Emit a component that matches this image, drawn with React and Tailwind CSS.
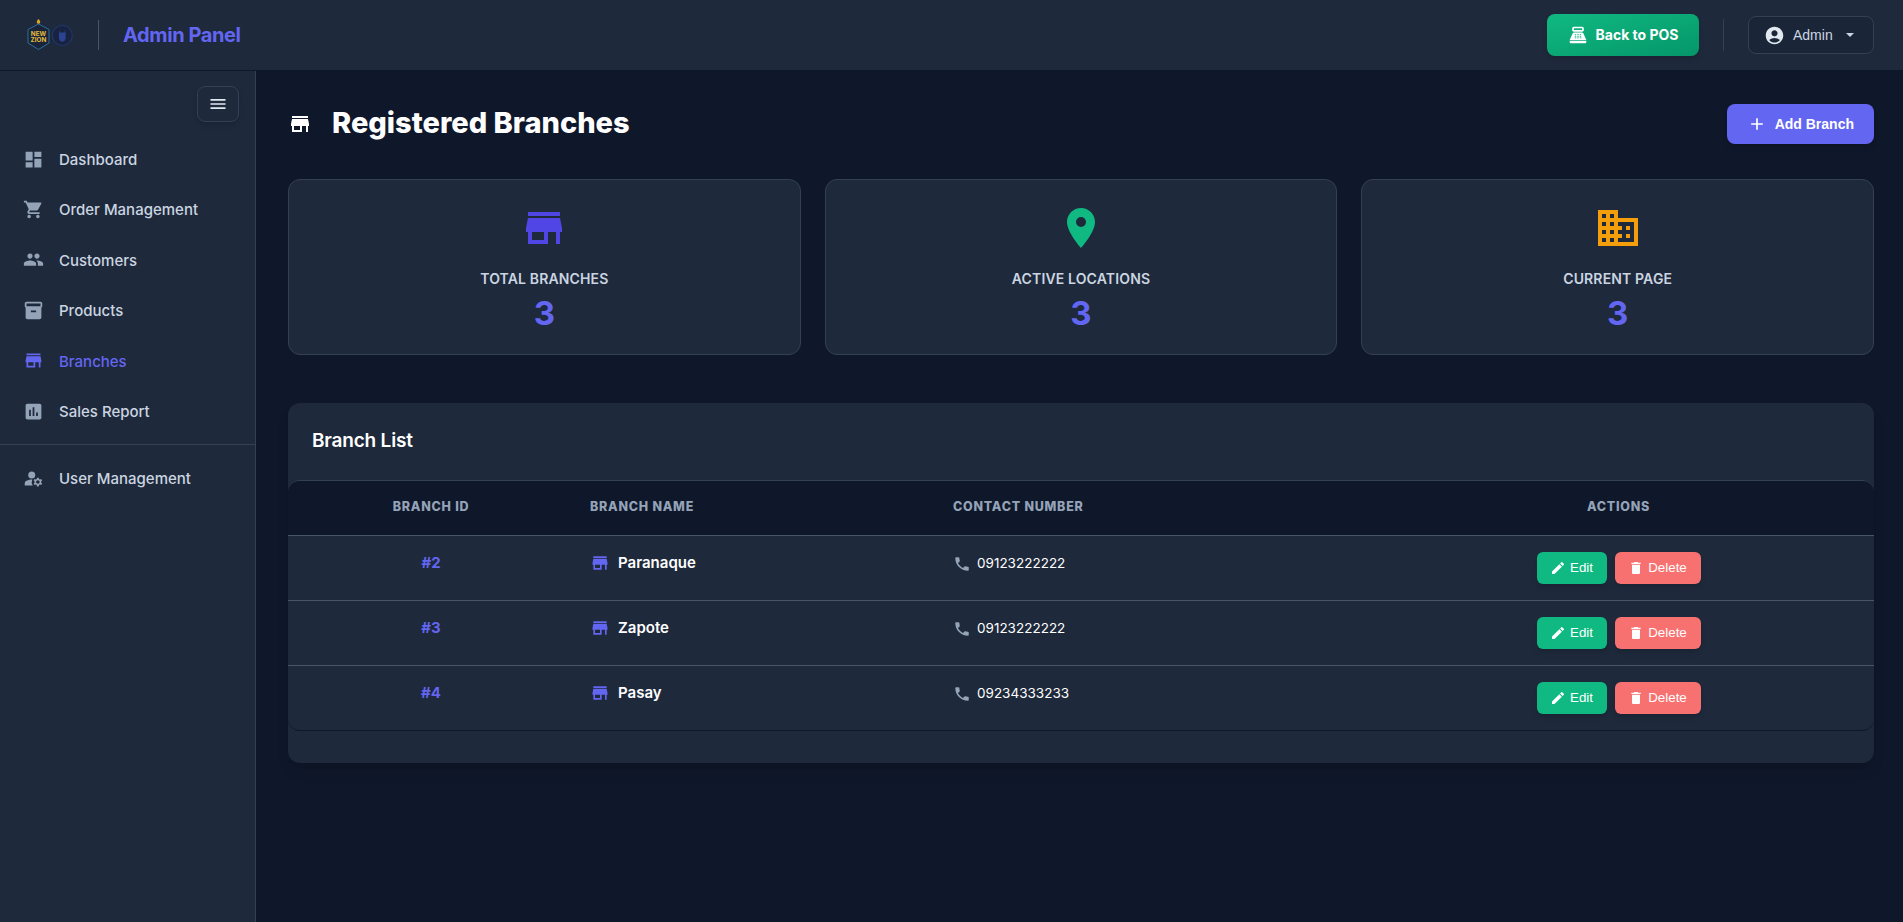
import {
  MdAccountCircle,
  MdAdd,
  MdAssessment,
  MdDashboard,
  MdDelete,
  MdDomain,
  MdEdit,
  MdInventory2,
  MdLocationOn,
  MdManageAccounts,
  MdMenu,
  MdPeople,
  MdPhone,
  MdPointOfSale,
  MdShoppingCart,
  MdStore,
} from "react-icons/md";

const navItems = [
  { label: "Dashboard", icon: MdDashboard },
  { label: "Order Management", icon: MdShoppingCart },
  { label: "Customers", icon: MdPeople },
  { label: "Products", icon: MdInventory2 },
  { label: "Branches", icon: MdStore, active: true },
  { label: "Sales Report", icon: MdAssessment },
];

const stats = [
  { label: "Total Branches", value: 3, icon: MdStore, color: "text-[#4f46e5]" },
  { label: "Active Locations", value: 3, icon: MdLocationOn, color: "text-[#10b981]" },
  { label: "Current Page", value: 3, icon: MdDomain, color: "text-[#f59e0b]" },
];

const branches = [
  { id: 2, name: "Paranaque", phone: "09123222222" },
  { id: 3, name: "Zapote", phone: "09123222222" },
  { id: 4, name: "Pasay", phone: "09234333233" },
];

function Logo() {
  return (
    <svg width="46" height="32" viewBox="0 0 46 32" className="shrink-0">
      <path d="M11.5 0 C13.5 2 14 3.5 11.5 5.5 C9 3.5 9.5 2 11.5 0Z" fill="#d9a528" />
      <path d="M11.5 5 L22 10.5 L22 24 L11.5 30.5 L1 24 L1 10.5Z" fill="#1a2438" stroke="#2b6f9e" strokeWidth="1" />
      <text x="11.5" y="16.5" textAnchor="middle" fontSize="6.4" fontWeight="700" fill="#e3bd3e" fontFamily="Inter, sans-serif">NEW</text>
      <text x="11.5" y="22.5" textAnchor="middle" fontSize="6.4" fontWeight="700" fill="#e3bd3e" fontFamily="Inter, sans-serif">ZION</text>
      <circle cx="35.3" cy="16.5" r="10" fill="#18233f" stroke="#22356b" strokeWidth="1.2" />
      <path d="M33 10.5v3h4.6v-3l1 3.5v6l-1.5 2.5h-3.6l-1.5-2.5v-6Z" fill="#2b4390" />
    </svg>
  );
}

function NavRow({ label, icon: Icon, active }) {
  return (
    <a
      href="#"
      className={`flex h-[50.4px] items-center text-[15px] font-medium ${active ? "text-[#6366f1]" : "text-[#cbd5e1]"}`}
    >
      <span className={`flex w-[59px] justify-center pl-[7px] ${active ? "" : "text-[#94a3b8]"}`}>
        <Icon size={21} />
      </span>
      <span className="pt-[2px]">{label}</span>
    </a>
  );
}

function Sidebar() {
  return (
    <aside className="w-[256px] shrink-0 border-r border-[#334155] bg-[#1e293b] pt-[15px]">
      <div className="flex justify-end pr-4">
        <button
          type="button"
          className="flex h-9 w-[42px] items-center justify-center rounded-lg border border-[#334155] bg-[#1e293b] text-[#e2e8f0] shadow-md"
        >
          <MdMenu size={20} />
        </button>
      </div>
      <nav className="mt-3">
        {navItems.map((item) => (
          <NavRow key={item.label} {...item} />
        ))}
        <div className="my-2 border-t border-[#334155]" />
        <NavRow label="User Management" icon={MdManageAccounts} />
      </nav>
    </aside>
  );
}

export default function App() {
  return (
    <div className="flex min-h-screen flex-col bg-[#0f172a] font-['Inter',sans-serif]">
      <header className="flex h-[71px] shrink-0 items-center justify-between border-b border-[#0f172a] bg-[#1e293b] pl-[27px] pr-[29px]">
        <div className="flex items-center">
          <Logo />
          <div className="ml-[25px] h-[30px] w-px bg-[#475569]" />
          <span className="ml-6 text-xl font-bold tracking-[-0.02em] text-[#6366f1]">Admin Panel</span>
        </div>
        <div className="flex items-center">
          <button
            type="button"
            className="flex h-[42px] w-[152px] items-center justify-center gap-2 rounded-lg bg-gradient-to-br from-[#10b981] to-[#059669] text-sm font-bold text-white shadow-md"
          >
            <MdPointOfSale size={20} />
            Back to POS
          </button>
          <div className="mx-6 h-8 w-px bg-[#334155]" />
          <button
            type="button"
            className="flex h-[38px] w-[126px] items-center rounded-lg border border-[#334155] bg-[#1b2538] pl-[15px] font-['Liberation_Sans',sans-serif] text-sm text-[#cbd5e1]"
          >
            <MdAccountCircle size={21} className="text-[#e2e8f0]" />
            <span className="ml-[8px]">Admin</span>
            <span className="ml-[13px] border-x-[4px] border-t-[4px] border-x-transparent border-t-[#cbd5e1]" />
          </button>
        </div>
      </header>

      <div className="flex flex-1">
        <Sidebar />
        <main className="min-w-0 flex-1 pb-10 pl-8 pr-[29px] pt-[33px]">
          <div className="flex h-10 items-center justify-between">
            <div className="flex items-center gap-5">
              <MdStore size={24} className="text-white" />
              <h1 className="pb-[2px] text-[29px] font-extrabold text-white">Registered Branches</h1>
            </div>
            <button
              type="button"
              className="flex h-10 items-center gap-2 rounded-lg bg-[#6366f1] px-5 font-['Liberation_Sans',sans-serif] text-sm font-bold text-white shadow-md"
            >
              <MdAdd size={20} />
              Add Branch
            </button>
          </div>

          <div className="mt-[35px] grid grid-cols-3 gap-6">
            {stats.map((stat) => (
              <div
                key={stat.label}
                className="flex h-[176px] flex-col items-center rounded-xl border border-[#334155] bg-[#1e293b] pt-6"
              >
                <stat.icon size={48} className={stat.color} />
                <p className="mt-[17px] text-sm font-semibold uppercase tracking-[0.01em] text-[#cbd5e1]">
                  {stat.label}
                </p>
                <p className="mt-1 text-[33px] font-bold leading-10 text-[#6366f1]">{stat.value}</p>
              </div>
            ))}
          </div>

          <section className="mt-[48px] rounded-xl bg-[#1e293b] pb-8 shadow-lg">
            <div className="flex h-[77px] items-center px-6">
              <h2 className="text-[19px] font-semibold tracking-[-0.01em] text-white">Branch List</h2>
            </div>
            <div className="overflow-hidden rounded-xl border-b border-t border-[#0f172a] border-t-[#334155]">
              <table className="w-full table-fixed border-collapse text-sm">
                <thead>
                  <tr className="h-[54px] bg-[#0f172a] text-[12.5px] uppercase tracking-[0.06em] text-[#94a3b8]">
                    <th className="w-[286px] px-4 pb-[2px] text-center font-extrabold">Branch ID</th>
                    <th className="w-[363px] px-4 pb-[2px] text-left font-extrabold">Branch Name</th>
                    <th className="w-[426px] px-4 pb-[2px] text-left font-extrabold">Contact Number</th>
                    <th className="px-4 pb-[2px] text-center font-extrabold">Actions</th>
                  </tr>
                </thead>
                <tbody>
                  {branches.map((branch) => (
                    <tr key={branch.id} className="border-t border-[#475569]">
                      <td className="h-[65px] px-4 pt-[15px] text-center align-top text-[15px] font-bold leading-6 text-[#6366f1]">
                        #{branch.id}
                      </td>
                      <td className="px-4 pt-[15px] align-top">
                        <div className="flex h-6 items-center gap-2 text-[15px] font-semibold text-white">
                          <MdStore size={20} className="text-[#6366f1]" />
                          {branch.name}
                        </div>
                      </td>
                      <td className="px-4 pt-4 align-top">
                        <div className="flex h-6 items-center gap-[6px] text-[13.5px] text-white">
                          <MdPhone size={18} className="text-[#94a3b8]" />
                          {branch.phone}
                        </div>
                      </td>
                      <td className="px-4 py-4 align-top">
                        <div className="flex justify-center gap-2 font-['Liberation_Sans',sans-serif] text-[13.33px] text-white">
                          <button
                            type="button"
                            className="flex h-8 w-[70px] items-center justify-center gap-1 rounded-md bg-[#10b981] shadow-md"
                          >
                            <MdEdit size={16} />
                            Edit
                          </button>
                          <button
                            type="button"
                            className="flex h-8 w-[86px] items-center justify-center gap-1 rounded-md bg-[#f87171] shadow-md"
                          >
                            <MdDelete size={16} />
                            Delete
                          </button>
                        </div>
                      </td>
                    </tr>
                  ))}
                </tbody>
              </table>
            </div>
          </section>
        </main>
      </div>
    </div>
  );
}
